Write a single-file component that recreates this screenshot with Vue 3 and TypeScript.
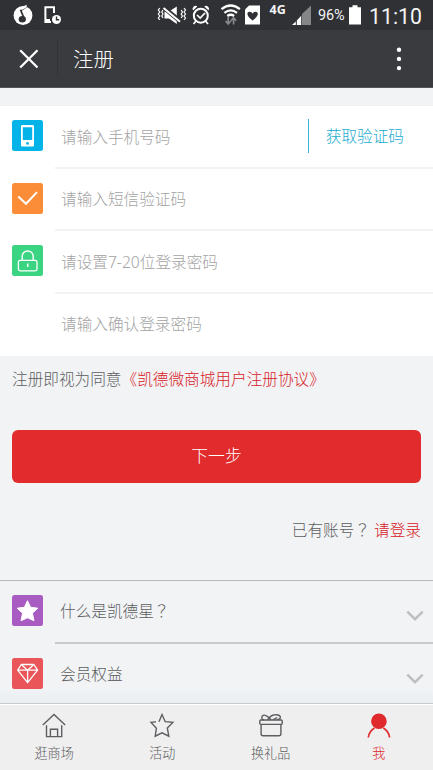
<script setup lang="ts">
import { ref } from 'vue'

interface Field {
  icon: string
  placeholder: string
  type: string
}

const fields: Field[] = [
  { icon: 'phone', placeholder: '请输入手机号码', type: 'tel' },
  { icon: 'check', placeholder: '请输入短信验证码', type: 'text' },
  { icon: 'lock', placeholder: '请设置7-20位登录密码', type: 'password' },
  { icon: '', placeholder: '请输入确认登录密码', type: 'password' },
]
const values = ref<string[]>(fields.map(() => ''))

const topics = [
  { icon: 'star', label: '什么是凯德星', mark: '？' },
  { icon: 'gem', label: '会员权益', mark: '' },
]

const tabs = [
  { icon: 'home', label: '逛商场' },
  { icon: 'star', label: '活动' },
  { icon: 'gift', label: '换礼品' },
  { icon: 'me', label: '我' },
]
const current = ref('me')
</script>

<template>
  <div class="screen">
    <div class="status">
      <svg class="status-left" viewBox="0 0 70 30" width="70" height="30">
        <circle cx="23" cy="15.5" r="9.4" fill="#fff" />
        <path d="M24.2 18.5 20.8 10.5 27 6.2" fill="none" stroke="#303134" stroke-width="1.7" />
        <path d="M21.6 10.2 20.8 7.4 26.6 4.8 26.8 7.2z" fill="#fff" />
        <ellipse cx="22.3" cy="19.2" rx="3.6" ry="3.3" fill="#303134" />
        <path d="M54 13V7.3h-8.6v14.8H51M46 20h4" fill="none" stroke="#fff" stroke-width="2" />
        <circle cx="56.5" cy="19.5" r="4.5" fill="#fff" />
        <path d="M56.5 16.6v3.2h2.7" fill="none" stroke="#303134" stroke-width="1.4" />
      </svg>
      <svg class="status-mid" viewBox="150 0 115 30" width="115" height="30">
        <path d="m159.8 8-1.5 2 1.5 2-1.5 2 1.5 2-1.5 2 1.5 2M163 10l-1.2 2 1.2 2-1.2 2 1.2 2M181.2 10l1.2 2-1.2 2 1.2 2-1.2 2M184 8l1.5 2-1.5 2 1.5 2-1.5 2 1.5 2-1.5 2" fill="none" stroke="#fff" stroke-width="1.2" />
        <path d="M164.5 11.5h4.5l7.8-5v17.5l-7.8-5.5h-4.5z" fill="#fff" />
        <path d="m164 7.8 16.5 13.7" stroke="#303134" stroke-width="4.4" />
        <path d="m163.5 8 16.5 13.7" stroke="#fff" stroke-width="2" />
        <circle cx="200.8" cy="15.7" r="7" fill="none" stroke="#fff" stroke-width="2" />
        <path d="m197 15 3.2 3 4.8-5M196 21l-2.5 3M205.5 21l2.5 3" fill="none" stroke="#fff" stroke-width="1.7" />
        <path d="M193 10.5a3 3 0 0 1 4.3-4zM208.6 10.5a3 3 0 0 0-4.3-4z" fill="#fff" />
        <path d="M221.5 9.2q9.2-7.4 18.4 0M224.4 12.8q6.3-5 12.6 0M227.3 16q3.4-2.5 6.8 0" fill="none" stroke="#fff" stroke-width="2.2" />
        <path d="M228.2 17v6.5M225.6 21l2.6 3 2.6-3M233.6 24.5V18M231 20.8l2.6-3 2.6 3" fill="none" stroke="#88898b" stroke-width="1.7" />
        <path d="M245 9.5 249 5.5h11V24.5h-15z" fill="#fff" />
        <path d="M252.6 20.5c-7-5-5.8-8.8-3-8.8 1.8 0 2.6 1 3 2 .4-1 1.2-2 3-2 2.8 0 4 3.8-3 8.8" fill="#303134" />
      </svg>
      <span class="network">4G</span>
      <svg class="signal" viewBox="291 0 22 30" width="22" height="30">
        <path d="M302 14 311 5.5V25h-9z" fill="#858688" />
        <path d="m292 25 3.8-3.6V25zM296.8 20.6l4.4-4.8V25h-4.4z" fill="#fff" />
      </svg>
      <span class="percent">96%</span>
      <svg class="battery" viewBox="349 0 12 30" width="12" height="30">
        <path d="M349 7.3h3.5V5.2h5v2.1h3.5v17.2h-12z" fill="#fff" />
      </svg>
      <time>11:10</time>
    </div>

    <header>
      <svg class="close" viewBox="0 0 20 20" width="20" height="20"><path d="m1.2 1.2 17.3 17.3M18.5 1.2 1.2 18.5" stroke="#fff" stroke-width="2.3" /></svg>
      <h1>注册</h1>
      <svg class="more" viewBox="0 0 6 24" width="6" height="24" fill="#fff">
        <circle cx="3" cy="2.7" r="2.2" /><circle cx="3" cy="11.9" r="2.2" /><circle cx="3" cy="21.1" r="2.2" />
      </svg>
    </header>

    <form class="fields" @submit.prevent>
      <div v-for="(f, i) in fields" :key="i" class="field">
        <span class="tile" :class="f.icon">
          <svg v-if="f.icon" viewBox="0 0 31 31" width="31" height="31" fill="none" stroke="#fff">
            <template v-if="f.icon === 'phone'">
              <rect x="9" y="5" width="13" height="21.5" rx="1.3" fill="#fff" stroke="none" />
              <path d="M10.8 7.3h9.4v12.7h-9.4z" fill="#04b4e8" stroke="none" />
              <circle cx="15.5" cy="23.4" r="1.4" fill="#04b4e8" stroke="none" />
            </template>
            <path v-else-if="f.icon === 'check'" d="m6.3 13.5 7.7 7.3L25 9.1" stroke-width="2" />
            <template v-else>
              <rect x="6.4" y="15.3" width="18.6" height="10.6" rx="1.8" stroke-width="1.3" />
              <path d="M10.2 15v-3.5a5.5 5.5 0 0 1 11 0V15M15.7 18.5v3.6" stroke-width="1.4" />
            </template>
          </svg>
        </span>
        <div class="entry">
          <input v-model="values[i]" :type="f.type" :placeholder="f.placeholder" />
          <button v-if="i === 0" type="button" class="send"><span>获取验证码</span></button>
        </div>
      </div>
    </form>

    <p class="agreement">注册即视为同意<a>《凯德微商城用户注册协议》</a></p>
    <button class="next" type="button">下一步</button>
    <p class="login">已有账号<span class="mark">？</span><a>请登录</a></p>

    <section class="topics">
      <div v-for="t in topics" :key="t.icon" class="topic">
        <span class="tile" :class="t.icon">
          <svg viewBox="0 0 31 31" width="31" height="31">
            <path v-if="t.icon === 'star'" d="m15.5 5.7 3.1 6.6 7.2.9-5.4 5 1.6 7.5-6.5-2.9-6.5 2.9 1.6-7.5-5.4-5 7.2-.9z" fill="#fff" stroke="#fff" stroke-linejoin="round" />
            <path v-else d="M9.3 6.5h12.6l3.7 5.7-10 12.5L5.7 12.2zM5.7 12.2h19.9M9.3 6.5l6.3 5.7 6.3-5.7M15.6 12.2v12.5" fill="none" stroke="#fff" stroke-width="1.3" stroke-linejoin="round" />
          </svg>
        </span>
        <div class="topic-body">
          <span>{{ t.label }}<span class="mark">{{ t.mark }}</span></span>
          <svg viewBox="0 0 18 12" width="18" height="12"><path d="m1.3 1.7 7.7 7.5 7.7-7.5" fill="none" stroke="#bebfc1" stroke-width="2.4" /></svg>
        </div>
      </div>
    </section>

    <nav>
      <a v-for="t in tabs" :key="t.icon" :class="{ active: current === t.icon }" @click="current = t.icon">
        <svg viewBox="0 0 26 26" width="26" height="26" fill="none" stroke="currentColor" stroke-width="1.4">
          <path v-if="t.icon === 'home'" d="M1.8 13 13 2.5 24.2 13M5.5 13.3v11.3h15.2V13.3M9.4 24.5v-7.3h7.2v7.3" />
          <path v-else-if="t.icon === 'star'" d="m10 9.7 3-7.2 3.2 7.2 7.7.7-5.6 5.6 1.5 8.2-6.8-3.4-6.8 3.4 1.2-8L2 10.4l5-.5" />
          <template v-else-if="t.icon === 'gift'">
            <rect x="1.8" y="8" width="22.4" height="4.4" rx="1" />
            <path d="M3.1 12.4v9.3q0 2 2 2h15.8q2 0 2-2v-9.3M13 7.8C8.5 2.6 5.5 2.4 4.2 4.2 3 6.3 4.5 7.8 6 7.8M9.5 7.8Q13 2.8 17.5 2.8C21.5 2.6 23.3 4.6 22 6.6L19 7.8M14.8 7.8l4.5-2.3" />
          </template>
          <template v-else>
            <circle cx="12.9" cy="9.3" r="7.8" fill="currentColor" stroke="none" />
            <path d="M2.3 25.5c.6-5 3-7.5 6.2-9.4M17.4 16.1c3.2 1.9 5.6 4.4 6.2 9.4" stroke-width="1.7" />
          </template>
        </svg>
        <span>{{ t.label }}</span>
      </a>
    </nav>
  </div>
</template>

<style>
body {
  margin: 0;
}
</style>

<style scoped>
* {
  box-sizing: border-box;
}
.screen {
  display: flex;
  flex-direction: column;
  width: 433px;
  height: 770px;
  overflow: hidden;
  background: #f1f3f5;
  color: #5c5d60;
  font: 300 15.65px/24px "Noto Sans", "Noto Sans CJK SC", sans-serif;
}
svg {
  display: block;
  flex: none;
}
button,
input {
  padding: 0;
  border: 0;
  background: none;
  font: inherit;
}
.status {
  display: flex;
  flex: none;
  height: 30px;
  background: #303134;
  color: #f4f4f4;
  font-family: Roboto, sans-serif;
  font-weight: 400;
}
.status-mid {
  margin-left: 80px;
}
.network {
  width: 26px;
  padding-left: 4.5px;
  font: bold 12.5px/20px "Open Sans", sans-serif;
}
.percent {
  width: 36px;
  padding-left: 5px;
  font-size: 14.5px;
  line-height: 32px;
  letter-spacing: -0.2px;
}
time {
  margin-left: 8px;
  font-size: 21.3px;
  line-height: 33px;
}
header {
  display: flex;
  flex: none;
  align-items: center;
  height: 58px;
  padding: 0 31.5px 0 19px;
  border-bottom: 1px solid #565759;
  background: #3a3b3e;
  color: #fff;
}
h1 {
  flex: 1;
  margin: 0 0 0 18px;
  padding: 1px 0 0 15px;
  border-left: 1px solid #333437;
  font-size: 20.4px;
  font-weight: 300;
  line-height: 36px;
}
.fields {
  flex: none;
  height: 251px;
  margin-top: 17px;
  border-top: 1px solid #eff0f1;
  background: #fff;
}
.field,
.topic {
  display: flex;
  height: 62.5px;
  padding-left: 12px;
}
.tile {
  flex: none;
  width: 31px;
  height: 31px;
  margin: 14px 12px 0 0;
  border-radius: 2.5px;
}
.phone {
  background: #04b4e8;
}
.check {
  background: #fc8d38;
}
.lock {
  background: #3bd483;
}
.tile.star {
  background: #a85bc0;
}
.gem {
  background: #e95558;
}
.entry {
  display: flex;
  flex: 1;
  align-items: center;
  padding: 0 29px 0 6px;
  border-bottom: 2px solid #f2f2f2;
}
.field:last-child .entry {
  border-bottom-color: transparent;
}
input {
  flex: 1;
  min-width: 0;
  height: 26px;
  padding-top: 1px;
  outline: 0;
  color: #66676a;
}
input::placeholder {
  color: #a3a3a3;
  opacity: 1;
}
.send {
  height: 34px;
  padding-left: 17px;
  border-left: 1px solid #36b6d4;
  color: #1aabd0;
}
p {
  flex: none;
  height: 24px;
  margin: 0;
}
a {
  color: #d92027;
}
.mark {
  font-family: "Noto Sans CJK TC", sans-serif;
}
.agreement {
  margin: 11px 0 0 12px;
}
.next {
  flex: none;
  height: 53px;
  margin: 38.5px 12px 0;
  border-radius: 6px;
  background: #e22b2d;
  color: #fff;
  font-size: 16.8px;
}
.login {
  margin: 35.5px 12px 0 0;
  text-align: right;
}
.login a {
  margin-left: 4px;
}
.topics {
  flex: 1;
  min-height: 0;
  margin-top: 38px;
  border-top: 1.5px solid #b8b9bb;
  background: linear-gradient(#f1f3f5 108px, #e9eef1);
}
.topic-body {
  display: flex;
  flex: 1;
  justify-content: space-between;
  padding: 18px 9px 0 5px;
  border-bottom: 2px solid #c9cacc;
}
.topic-body svg {
  margin-top: 11px;
}
.topic:last-child .topic-body {
  border: 0;
}
nav {
  display: grid;
  grid-template-columns: repeat(4, 1fr);
  flex: none;
  height: 67px;
  border-top: 1px solid #c8c9ca;
  background: #efefef;
  box-shadow: inset 0 1px #fff;
}
nav a {
  display: flex;
  flex-direction: column;
  align-items: center;
  padding-top: 8px;
  color: #5c5e61;
  font-size: 13.1px;
  line-height: 20px;
}
nav span {
  margin-top: 5px;
}
nav .active {
  color: #e0292d;
}
</style>
